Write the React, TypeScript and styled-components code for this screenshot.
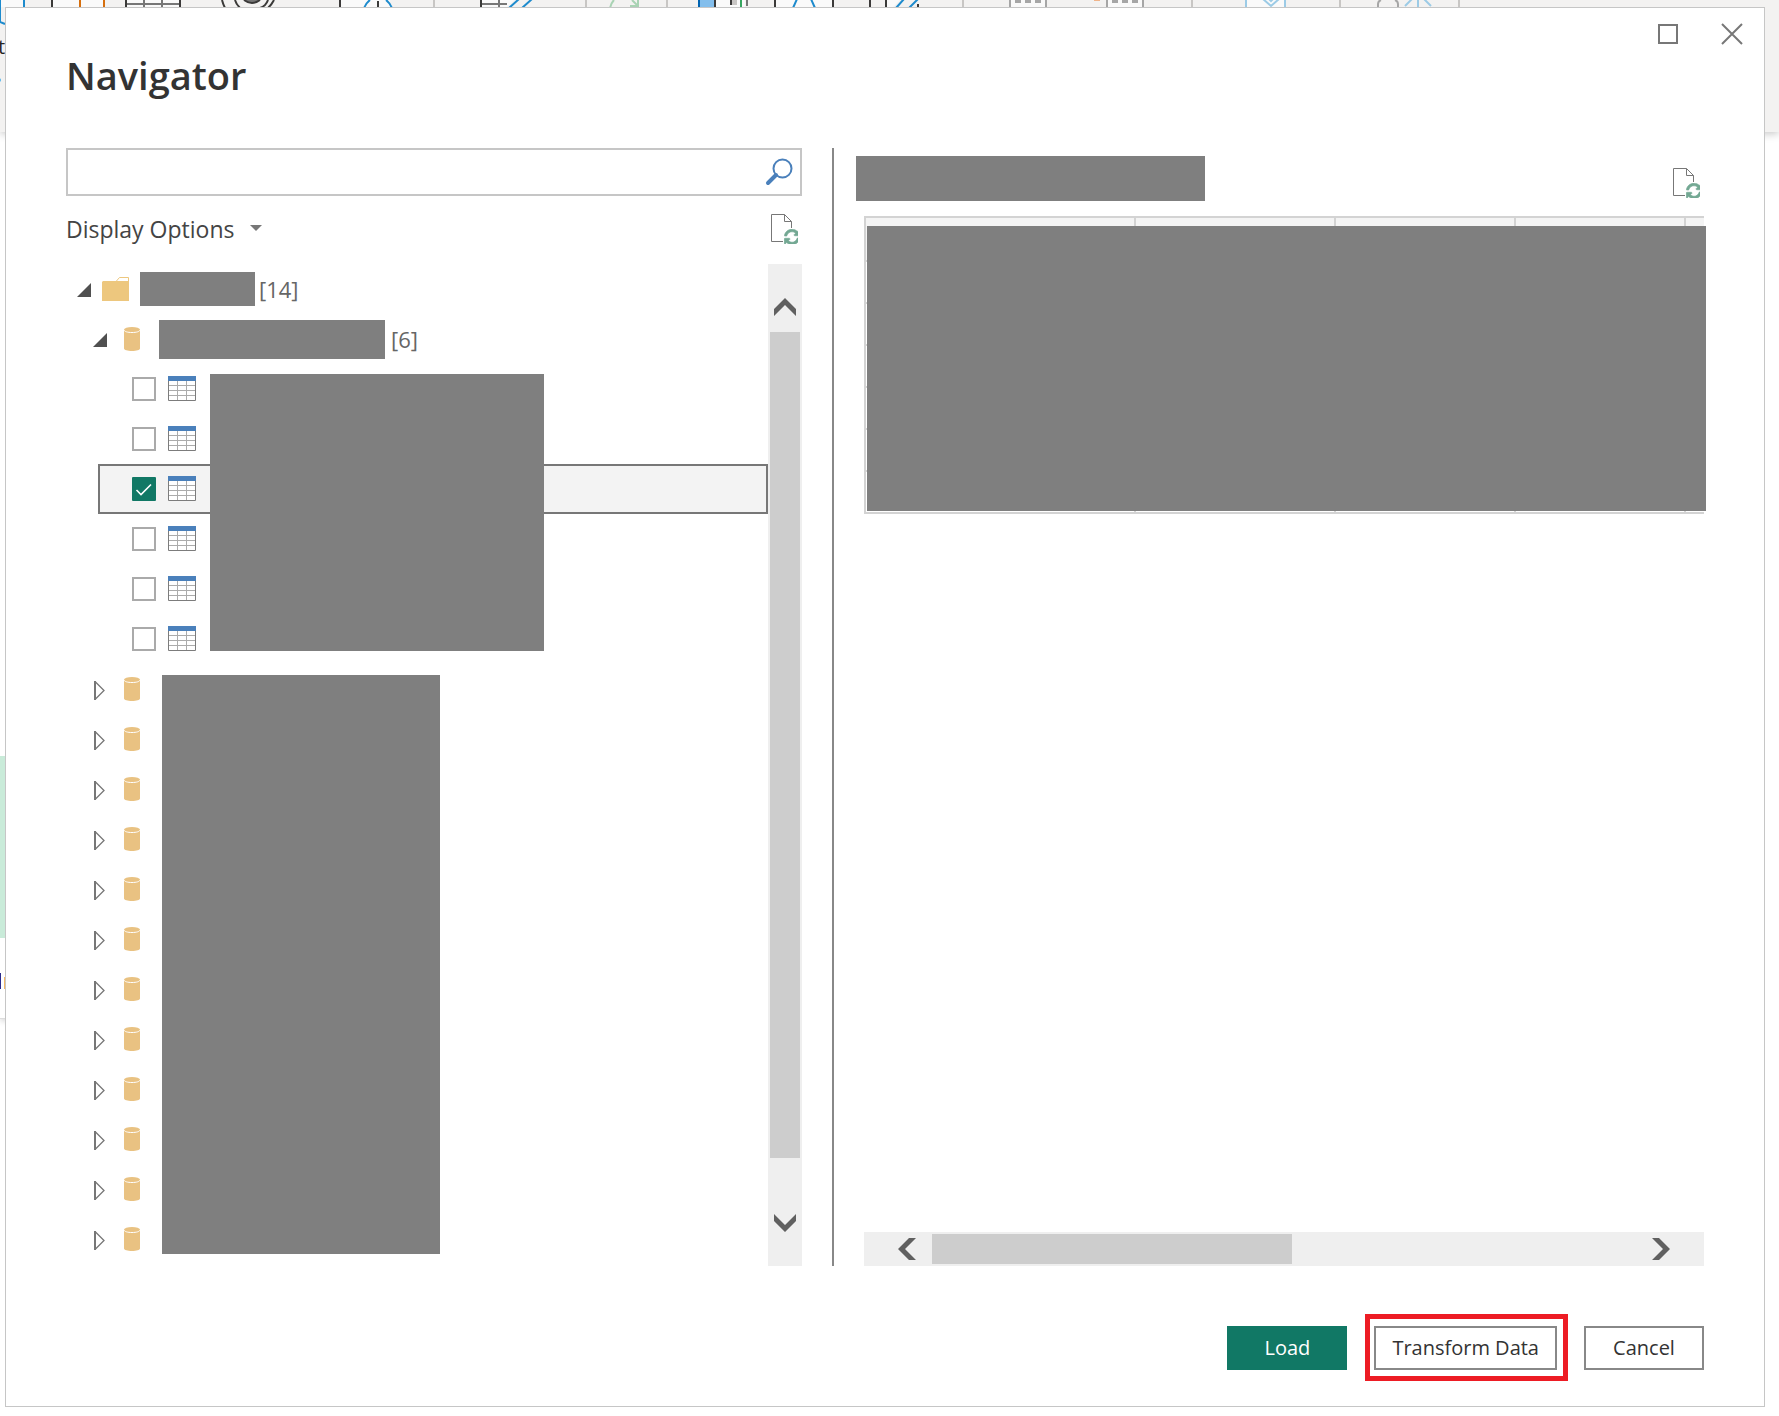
import React, { useState } from "react";
import styled, { createGlobalStyle, css } from "styled-components";
import { FaSyncAlt } from "react-icons/fa";

const color = {
  text: "#333333",
  muted: "#666666",
  line: "#c6c6c6",
  outline: "#888888",
  accent: "#117865",
  redact: "#7f7f7f",
  track: "#efefef",
  thumb: "#cdcdcd",
  arrow: "#606060",
  grid: "#d3d3d3",
  highlight: "#ed1c24",
};

const GlobalStyle = createGlobalStyle`
  *, *::before, *::after { box-sizing: border-box; }
  body {
    margin: 0;
    background: #ffffff;
    color: ${color.text};
    font-family: "Open Sans", "Noto Sans", sans-serif;
  }
  button, input { font: inherit; color: inherit; }
  svg { display: block; flex: none; }
`;

/* ---------- application window behind the dialog ---------- */

const Screen = styled.div`
  position: relative;
  display: flex;
  min-height: 100vh;
  padding: 7px 14px 9px 5px;
  overflow: hidden;
`;

const Backdrop = styled.div`
  position: absolute;
  inset: 0;
  overflow: hidden;
`;

const Ribbon = styled.div`
  position: relative;
  height: 132px;
  background: #f3f2f1;
  box-shadow: 0 2px 8px rgba(0, 0, 0, 0.22);
`;

const RibbonLabel = styled.span`
  position: absolute;
  top: 34px;
  left: -2px;
  font-size: 20px;
  line-height: 26px;
  color: #252423;
`;

const CanvasCard = styled.div`
  width: 50%;
  height: 887px;
  padding-top: 624px;
  border-bottom: 1px solid #dddddd;
  box-shadow: 0 2px 6px rgba(0, 0, 0, 0.16);
`;

const CanvasTile = styled.div`
  height: 182px;
  background: #c9ebd9;
`;

const CanvasCaption = styled.div`
  display: flex;
  align-items: flex-end;
  gap: 3px;
  height: 51px;
`;

const CaptionMark = styled.span<{ $color: string; $height: number }>`
  width: 1px;
  height: ${(p) => p.$height}px;
  background: ${(p) => p.$color};
`;

/* ---------- dialog frame ---------- */

const Dialog = styled.main`
  position: relative;
  display: flex;
  flex: 1;
  flex-direction: column;
  min-width: 0;
  border: 1px solid ${color.line};
  background: #ffffff;
`;

const DialogHeader = styled.header`
  display: flex;
  justify-content: space-between;
  align-items: flex-start;
  height: 140px;
  padding-left: 60px;
`;

const Title = styled.h1`
  margin: 0;
  padding-top: 43px;
  font-size: 38px;
  font-weight: 600;
  line-height: 48px;
`;

const WindowControls = styled.div`
  display: flex;
`;

const PlainButton = styled.button`
  display: flex;
  align-items: center;
  justify-content: center;
  padding: 0;
  border: 0;
  background: transparent;
  cursor: pointer;
`;

const WindowButton = styled(PlainButton)`
  width: 64px;
  height: 52px;
`;

const Body = styled.div`
  display: grid;
  flex: 1;
  grid-template-columns: minmax(0, 766fr) 2px minmax(0, 870fr);
  padding: 0 60px;
`;

const Divider = styled.div`
  background: ${color.outline};
`;

/* ---------- left pane ---------- */

const SourcePane = styled.section`
  display: flex;
  flex-direction: column;
  padding-right: 30px;
`;

const SearchBox = styled.div`
  display: flex;
  align-items: center;
  height: 48px;
  padding-right: 7px;
  border: 2px solid ${color.line};
`;

const SearchInput = styled.input`
  flex: 1;
  min-width: 0;
  height: 100%;
  padding: 0 10px;
  border: 0;
  outline: 0;
  background: transparent;
  font-size: 22px;
`;

const Toolbar = styled.div`
  display: flex;
  align-items: center;
  justify-content: space-between;
  height: 68px;
  padding: 0 4px 2px 0;
`;

const DisplayOptions = styled(PlainButton)`
  gap: 16px;
  font-size: 23px;
  line-height: 32px;
  color: #444444;
`;

const TreeArea = styled.div`
  display: flex;
  flex: 1;
`;

const Tree = styled.ul`
  flex: 1;
  min-width: 0;
  margin: 0;
  padding: 0;
  list-style: none;
`;

const Group = styled.ul`
  position: relative;
  margin: 0;
  padding: 0;
  list-style: none;
`;

const row = css`
  display: flex;
  align-items: center;
  height: 50px;
`;

const FolderRow = styled.div`
  ${row}
  gap: 10px;
  padding-left: 10px;
`;

const DatabaseRow = styled.div`
  ${row}
  gap: 16px;
  padding-left: 26px;
`;

const TableRow = styled.label<{ $selected: boolean }>`
  ${row}
  gap: 12px;
  margin-left: 32px;
  padding-left: 32px;
  border: 2px solid ${(p) => (p.$selected ? "#777777" : "transparent")};
  background: ${(p) => (p.$selected ? "#f3f3f3" : "transparent")};
  cursor: pointer;
`;

const Toggle = styled(PlainButton)`
  width: 16px;
  height: 24px;
`;

const NodeName = styled.span<{ $indent: number; $gap: number }>`
  display: flex;
  align-items: center;
  gap: ${(p) => p.$gap}px;
  padding-left: ${(p) => p.$indent}px;
  font-size: 22px;
  line-height: 32px;
  color: ${color.muted};
`;

const Redacted = styled.span<{ $width: number; $height: number }>`
  width: ${(p) => p.$width}px;
  height: ${(p) => p.$height}px;
  background: ${color.redact};
`;

const GroupCover = styled.li<{ $left: number; $width: number; $top: number; $bottom: number }>`
  position: absolute;
  top: ${(p) => p.$top}px;
  bottom: ${(p) => p.$bottom}px;
  left: ${(p) => p.$left}px;
  width: ${(p) => p.$width}px;
  background: ${color.redact};
`;

const CheckWrap = styled.span`
  position: relative;
  width: 24px;
  height: 24px;

  svg {
    position: absolute;
    inset: 0;
    pointer-events: none;
  }
`;

const CheckBox = styled.input`
  display: block;
  width: 24px;
  height: 24px;
  margin: 0;
  border: 2px solid #aaaaaa;
  background: #ffffff;
  appearance: none;

  &:checked {
    border-color: ${color.accent};
    border-radius: 1px;
    background: ${color.accent};
  }
`;

/* ---------- scroll bars ---------- */

const ScrollBar = styled.div<{ $vertical?: boolean }>`
  display: flex;
  flex: none;
  flex-direction: ${(p) => (p.$vertical ? "column" : "row")};
  width: ${(p) => (p.$vertical ? "34px" : "auto")};
  height: ${(p) => (p.$vertical ? "auto" : "34px")};
  background: ${color.track};
`;

const ScrollButton = styled(PlainButton)<{ $side: "up" | "down" | "left" | "right" }>`
  flex: none;
  ${(p) => (p.$side === "up" || p.$side === "down" ? "height: 68px;" : "width: 68px;")}
  ${(p) => p.$side === "up" && "padding-top: 18px;"}
  ${(p) => p.$side === "down" && "padding-bottom: 18px;"}
  ${(p) => p.$side === "left" && "padding-left: 18px;"}
  ${(p) => p.$side === "right" && "padding-right: 18px;"}
`;

const ScrollLane = styled.div<{ $vertical?: boolean }>`
  display: flex;
  flex: 1;
  flex-direction: ${(p) => (p.$vertical ? "column" : "row")};
  padding: ${(p) => (p.$vertical ? "0 2px" : "2px 0")};
`;

const Thumb = styled.div<{ $share: number }>`
  flex: 0 0 ${(p) => p.$share}%;
  background: ${color.thumb};
`;

/* ---------- right pane ---------- */

const PreviewPane = styled.section`
  display: flex;
  flex-direction: column;
`;

const PreviewHeader = styled.div`
  display: flex;
  align-items: flex-start;
  justify-content: space-between;
  height: 68px;
  padding: 8px 4px 0 22px;
`;

const PreviewRefresh = styled(PlainButton)`
  height: 54px;
`;

const PreviewBody = styled.div`
  display: flex;
  flex: 1;
  flex-direction: column;
  justify-content: space-between;
  padding-left: 30px;
`;

const PreviewFrame = styled.div`
  position: relative;
`;

const PreviewTable = styled.table`
  width: 100%;
  table-layout: fixed;
  border: 2px solid ${color.grid};
  border-right: 0;
  border-bottom: 0;
  border-spacing: 0;

  th, td {
    height: 42px;
    padding: 0;
    border-right: 2px solid ${color.grid};
    border-bottom: 2px solid ${color.grid};
  }
  th { height: 44px; background: #f4f4f4; }
  th:last-child, td:last-child { border-right: 0; }
`;

const PreviewColumn = styled.col<{ $width?: number }>`
  width: ${(p) => (p.$width ? `${p.$width}px` : "auto")};
`;

const PreviewCover = styled.div`
  position: absolute;
  inset: 10px -2px 3px 3px;
  background: ${color.redact};
`;

/* ---------- footer ---------- */

const Footer = styled.footer`
  display: flex;
  justify-content: flex-end;
  gap: 27px;
  height: 140px;
  padding: 60px 60px 36px;
`;

const ActionButton = styled.button<{ $primary?: boolean }>`
  min-width: 120px;
  height: 44px;
  padding: 0 16px;
  border: 2px solid ${(p) => (p.$primary ? color.accent : color.outline)};
  background: ${(p) => (p.$primary ? color.accent : "#ffffff")};
  color: ${(p) => (p.$primary ? "#ffffff" : color.text)};
  font-size: 20px;
  line-height: 28px;
  cursor: pointer;
`;

const Highlighted = styled.div`
  position: relative;
  height: 44px;

  &::after {
    content: "";
    position: absolute;
    inset: -12px -11px -11px -9px;
    border: 5px solid ${color.highlight};
    pointer-events: none;
  }
`;

/* ---------- icons ---------- */

const RibbonIcons = () => (
  <svg width="1779" height="90" viewBox="0 0 1779 90" fill="none">
    <path d="M1 0H24V7H1zM53 0H80V7H53zM81 0H103V7H81zM126 0H181V7H126zM340 0H390V7H340zM481 0H514L507 7H481zM716 0H745V7H716zM776 0H832V7H776zM886 0H900L893 7H886zM1010 0H1046V7H1010zM1107 0H1143V7H1107zM1246 0H1285V7H1246z" fill="#fafafa" />
    <g stroke="#1e8bcd" strokeWidth="2">
      <path d="M24 0V7M0 0V22L5 24" />
      <path d="M364 8Q366 3 370 0M392 8Q390 3 386 0" />
      <path d="M519 -1L509 8M532 -1L522 8M797 -1L793 8M811 -1L815 8M904 -1L896 8M918 -1L909 8" />
    </g>
    <path d="M80 0V7M104 0V7" stroke="#d66f0e" strokeWidth="2" />
    <path d="M52 0V7M126 0V7M180 0V7M340 0V7M378 1V7M481 0V7M715 0V7M731 0V5M775 0V7M833 0V7M870 0V7M886 0V7M918 4V7" stroke="#3b3a39" strokeWidth="2" />
    <path d="M144 0V7M162 0V7M127 4H179M499 0V7M482 4H507M747 0V6" stroke="#777777" strokeWidth="2" />
    <path d="M222 0Q223 4 225 8M274 0Q272 4 268 8M235 0Q236 4 240 8M268 0Q266 6 260 8" stroke="#3b3a39" strokeWidth="2" />
    <path d="M244 0Q252 6 260 0" fill="#777777" stroke="#3b3a39" strokeWidth="2" />
    <path d="M614 0Q611 3 610 8M630 6H638V0M632 0L638 6" stroke="#a9d3b4" strokeWidth="2" />
    <path d="M700 0H714V7H700z" fill="#83beec" />
    <path d="M699 0V7" stroke="#0063b1" strokeWidth="2" />
    <path d="M732 0H737V5H732z" fill="#c8c6c4" />
    <path d="M741 0V7" stroke="#37a660" strokeWidth="2" />
    <path d="M434 0V7M586 0V7M667 0V7M963 0V7M1192 0V7M1340 0V7M1459 0V7" stroke="#c8c6c4" strokeWidth="2" />
    <path d="M1010 0V7M1046 0V7M1107 0V7M1143 0V7M1378 8V4Q1378 1 1381 0M1398 8V4Q1398 1 1395 0" stroke="#a6a6a6" strokeWidth="2" />
    <path d="M1015 1.5H1042M1112 1.5H1139" stroke="#a6a6a6" strokeWidth="3" strokeDasharray="6 4" />
    <path d="M1094 0H1100" stroke="#f0b48a" strokeWidth="2" />
    <path d="M1246 0V7M1285 0V7M1263 -1L1271 6L1279 -1M1268 -2L1271 1L1274 -2M1418 0V7M1412 -1L1405 6M1424 -1L1431 6" stroke="#9ccbe6" strokeWidth="2" />
    <circle cx="-1" cy="80" r="2" fill="#5bb8ec" />
  </svg>
);

const MaximizeIcon = () => (
  <svg width="20" height="20" viewBox="0 0 20 20" fill="none" stroke="#777777" strokeWidth="2">
    <path d="M1 1H19V19H1z" />
  </svg>
);

const CloseIcon = () => (
  <svg width="22" height="22" viewBox="0 0 22 22" fill="none" stroke="#777777" strokeWidth="2">
    <path d="M1 1L21 21M21 1L1 21" />
  </svg>
);

const SearchIcon = () => (
  <svg width="28" height="28" viewBox="0 0 28 28" fill="none" stroke="#4a80bb">
    <circle cx="17.5" cy="10.5" r="9" strokeWidth="2" />
    <path d="M11 17L3 25" strokeWidth="4" strokeLinecap="round" />
  </svg>
);

const RefreshPageIcon = () => (
  <svg width="27" height="30" viewBox="0 0 27 30" fill="none">
    <path d="M12 27.5H0.5V0.5H13.5L20.5 7.5V14M13.5 0.5V7.5H20.5" stroke="#777777" />
    <FaSyncAlt x="13" y="15" width="14" height="15" color="#73a893" stroke="#73a893" strokeWidth="20" />
  </svg>
);

const CaretIcon = () => (
  <svg width="12" height="10" viewBox="0 0 12 10">
    <path d="M0 1H12L6 7z" fill="#777777" />
  </svg>
);

const ExpandedIcon = () => (
  <svg width="16" height="22" viewBox="0 0 16 22">
    <path d="M15 5V19H1z" fill="#505050" />
  </svg>
);

const CollapsedIcon = () => (
  <svg width="16" height="22" viewBox="0 0 16 22" fill="none" stroke="#777777">
    <path d="M3 3V22" strokeWidth="2" />
    <path d="M3.5 4L12 12.5L3.5 21" strokeWidth="1.3" />
  </svg>
);

const FolderIcon = () => (
  <svg width="27" height="24" viewBox="0 0 27 24">
    <path d="M14 4.5L17.5 0.5H26.5V5" fill="#ffffff" stroke="#edc77e" />
    <path d="M1 4H27V24H0V5z" fill="#edc77e" />
  </svg>
);

const DatabaseIcon = () => (
  <svg width="16" height="24" viewBox="0 0 16 24">
    <path d="M0 2.8V21.5C0 23 3.5 24 8 24S16 23 16 21.5V2.8z" fill="#e9c282" />
    <ellipse cx="8" cy="2.8" rx="8" ry="2.8" fill="#e9c282" />
    <path d="M0 3C0.5 4.6 3.5 5.5 8 5.5S15.5 4.6 16 3" fill="none" stroke="#ffffff" />
  </svg>
);

const TableIcon = () => (
  <svg width="28" height="26" viewBox="0 0 28 26" fill="none">
    <path d="M1 5H27V24H1z" fill="#ffffff" />
    <path d="M9.5 5V24M18.5 5V24M1 9.5H27M1 14.5H27M1 19.5H27" stroke="#ababab" />
    <path d="M0.5 5V24.5H27.5V5" stroke="#7c7c7c" />
    <path d="M0 0H28V5H0z" fill="#4a80bb" />
  </svg>
);

const CheckIcon = () => (
  <svg width="24" height="24" viewBox="0 0 24 24" fill="none" stroke="#ffffff" strokeWidth="1.6">
    <path d="M4.5 13L9 17.5L19 7.5" />
  </svg>
);

const chevrons = {
  up: { w: 22, h: 18, points: "0,18 0,11 11,0 22,11 22,18 11,7" },
  down: { w: 22, h: 18, points: "0,0 0,7 11,18 22,7 22,0 11,11" },
  left: { w: 18, h: 22, points: "18,0 11,0 0,11 11,22 18,22 7,11" },
  right: { w: 18, h: 22, points: "0,0 7,0 18,11 7,22 0,22 11,11" },
};

const Chevron = ({ side }: { side: keyof typeof chevrons }) => {
  const { w, h, points } = chevrons[side];
  return (
    <svg width={w} height={h} viewBox={`0 0 ${w} ${h}`}>
      <polygon points={points} fill={color.arrow} />
    </svg>
  );
};

/* ---------- page ---------- */

const tables = [0, 1, 2, 3, 4, 5];
const databases = Array.from({ length: 12 }, (_, i) => i);
const previewColumns = [270, 200, 180, 170, undefined];

export default function App() {
  const [selected, setSelected] = useState<number[]>([2]);
  const flip = (id: number) =>
    setSelected((now) => (now.includes(id) ? now.filter((n) => n !== id) : [...now, id]));

  return (
    <Screen>
      <GlobalStyle />
      <Backdrop aria-hidden="true">
        <Ribbon>
          <RibbonIcons />
          <RibbonLabel>t</RibbonLabel>
        </Ribbon>
        <CanvasCard>
          <CanvasTile />
          <CanvasCaption>
            <CaptionMark $color="#2b2b8c" $height={16} />
            <CaptionMark $color="#f5b865" $height={12} />
          </CanvasCaption>
        </CanvasCard>
      </Backdrop>

      <Dialog aria-labelledby="dialog-title">
        <DialogHeader>
          <Title id="dialog-title">Navigator</Title>
          <WindowControls>
            <WindowButton type="button" aria-label="Maximize"><MaximizeIcon /></WindowButton>
            <WindowButton type="button" aria-label="Close"><CloseIcon /></WindowButton>
          </WindowControls>
        </DialogHeader>

        <Body>
          <SourcePane>
            <SearchBox>
              <SearchInput type="text" aria-label="Search" />
              <PlainButton type="button" aria-label="Run search"><SearchIcon /></PlainButton>
            </SearchBox>
            <Toolbar>
              <DisplayOptions type="button">Display Options<CaretIcon /></DisplayOptions>
              <PlainButton type="button" aria-label="Refresh list"><RefreshPageIcon /></PlainButton>
            </Toolbar>
            <TreeArea>
              <Tree>
                <li>
                  <FolderRow>
                    <Toggle type="button" aria-label="Collapse folder"><ExpandedIcon /></Toggle>
                    <FolderIcon />
                    <NodeName $indent={1} $gap={4}><Redacted $width={115} $height={34} />[14]</NodeName>
                  </FolderRow>
                  <Group>
                    <li>
                      <DatabaseRow>
                        <Toggle type="button" aria-label="Collapse database"><ExpandedIcon /></Toggle>
                        <DatabaseIcon />
                        <NodeName $indent={3} $gap={6}><Redacted $width={226} $height={39} />[6]</NodeName>
                      </DatabaseRow>
                      <Group>
                        {tables.map((id) => (
                          <li key={id}>
                            <TableRow $selected={selected.includes(id)}>
                              <CheckWrap>
                                <CheckBox
                                  type="checkbox"
                                  aria-label={`Table ${id + 1}`}
                                  checked={selected.includes(id)}
                                  onChange={() => flip(id)}
                                />
                                {selected.includes(id) && <CheckIcon />}
                              </CheckWrap>
                              <TableIcon />
                            </TableRow>
                          </li>
                        ))}
                        <GroupCover aria-hidden="true" $left={144} $width={334} $top={10} $bottom={13} />
                      </Group>
                    </li>
                  </Group>
                  <Group>
                    {databases.map((id) => (
                      <li key={id}>
                        <DatabaseRow>
                          <Toggle type="button" aria-label={`Expand database ${id + 1}`}><CollapsedIcon /></Toggle>
                          <DatabaseIcon />
                        </DatabaseRow>
                      </li>
                    ))}
                    <GroupCover aria-hidden="true" $left={96} $width={278} $top={11} $bottom={10} />
                  </Group>
                </li>
              </Tree>
              <ScrollBar $vertical>
                <ScrollButton type="button" aria-label="Scroll up" $side="up"><Chevron side="up" /></ScrollButton>
                <ScrollLane $vertical><Thumb $share={95.4} /></ScrollLane>
                <ScrollButton type="button" aria-label="Scroll down" $side="down"><Chevron side="down" /></ScrollButton>
              </ScrollBar>
            </TreeArea>
          </SourcePane>

          <Divider />

          <PreviewPane>
            <PreviewHeader>
              <Redacted $width={349} $height={45} />
              <PreviewRefresh type="button" aria-label="Refresh preview"><RefreshPageIcon /></PreviewRefresh>
            </PreviewHeader>
            <PreviewBody>
              <PreviewFrame>
                <PreviewTable aria-label="Preview">
                  <colgroup>
                    {previewColumns.map((width, i) => <PreviewColumn key={i} $width={width} />)}
                  </colgroup>
                  <thead>
                    <tr>{previewColumns.map((_, i) => <th key={i} scope="col" />)}</tr>
                  </thead>
                  <tbody>
                    {tables.map((r) => (
                      <tr key={r}>{previewColumns.map((_, i) => <td key={i} />)}</tr>
                    ))}
                  </tbody>
                </PreviewTable>
                <PreviewCover />
              </PreviewFrame>
              <ScrollBar>
                <ScrollButton type="button" aria-label="Scroll left" $side="left"><Chevron side="left" /></ScrollButton>
                <ScrollLane><Thumb $share={51.2} /></ScrollLane>
                <ScrollButton type="button" aria-label="Scroll right" $side="right"><Chevron side="right" /></ScrollButton>
              </ScrollBar>
            </PreviewBody>
          </PreviewPane>
        </Body>

        <Footer>
          <ActionButton type="button" $primary>Load</ActionButton>
          <Highlighted><ActionButton type="button">Transform Data</ActionButton></Highlighted>
          <ActionButton type="button">Cancel</ActionButton>
        </Footer>
      </Dialog>
    </Screen>
  );
}
